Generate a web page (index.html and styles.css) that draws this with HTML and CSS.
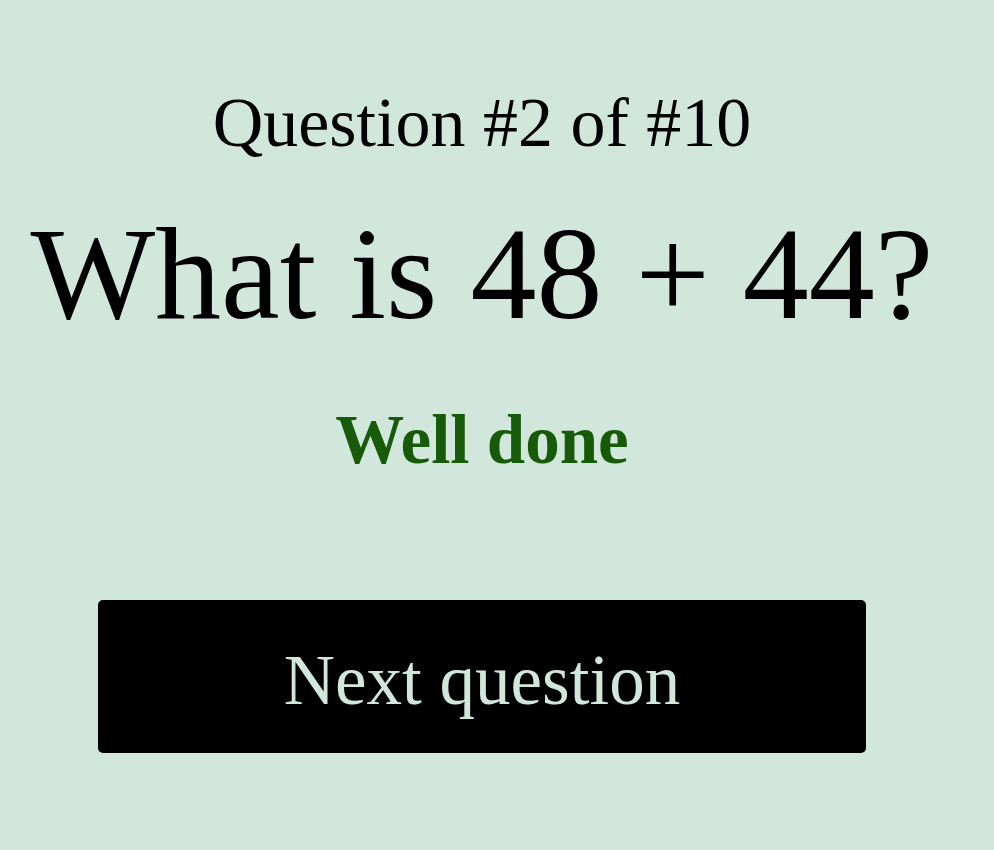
FILE: index.html
```html
<!DOCTYPE html>
<html>
<head>
<meta charset="utf-8">
<link rel="stylesheet" href="styles.css">
</head>
<body>
<main class="quiz">
  <h2 class="counter">Question #2 of #10</h2>
  <h1 class="question">What is 48 + 44?</h1>
  <p class="feedback">Well done</p>
  <button class="next">Next question</button>
</main>
</body>
</html>
```
FILE: styles.css
```css
html, body {
  margin: 0;
  padding: 0;
  background: #d2e7dc;
  height: 100%;
}
body {
  font-family: "Liberation Serif", "Times New Roman", serif;
  color: #000;
}
.quiz {
  width: 964px;
  display: flex;
  flex-direction: column;
  align-items: center;
  padding-top: 78px;
}
.counter {
  margin: 0;
  font-weight: 400;
  font-size: 70px;
  line-height: 90px;
}
.question {
  margin: 36px 0 0;
  font-weight: 400;
  font-size: 132px;
  line-height: 140px;
}
.feedback {
  margin: 56px 0 0;
  font-weight: 700;
  font-size: 69px;
  line-height: 80px;
  color: #165a0a;
}
.next {
  margin-top: 120px;
  width: 768px;
  height: 153px;
  background: #000;
  color: #d2e7dc;
  border: none;
  border-radius: 5px;
  font-family: "Liberation Serif", "Times New Roman", serif;
  font-size: 71px;
  padding: 8px 0 0;
}
```
